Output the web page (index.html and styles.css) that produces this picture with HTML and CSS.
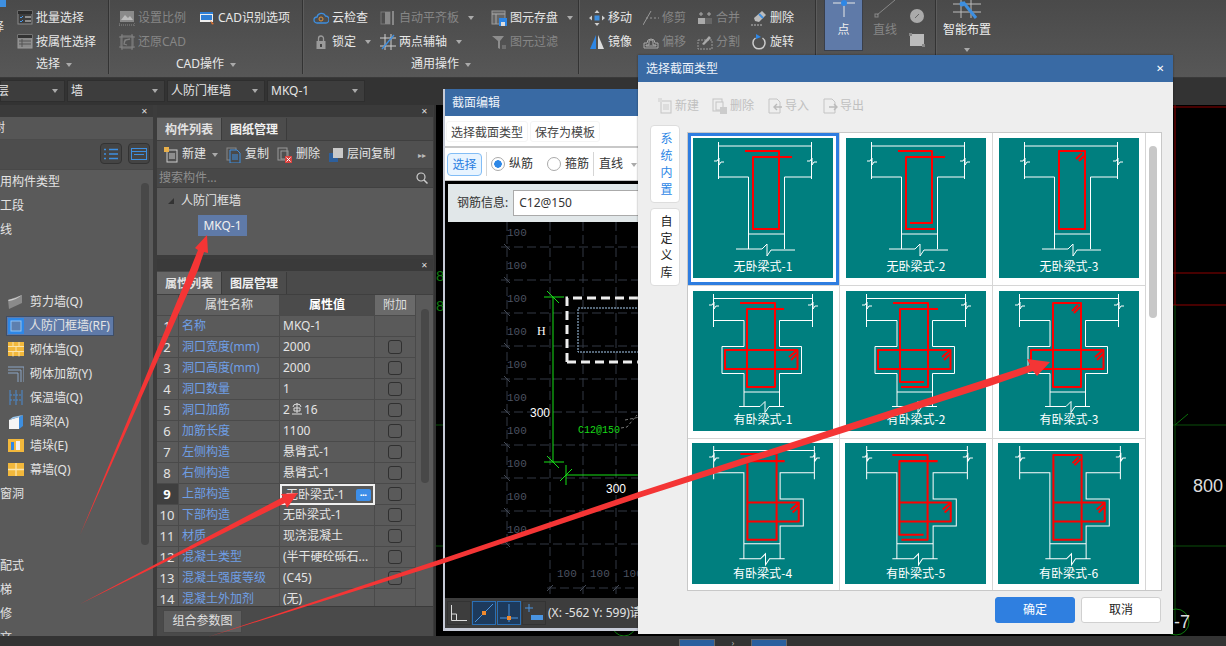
FILE: index.html
```html
<!DOCTYPE html>
<html lang="zh-CN">
<head>
<meta charset="utf-8">
<title>截面编辑</title>
<link rel="stylesheet" href="styles.css">
</head>
<body>
<svg class="defs" width="0" height="0" aria-hidden="true">
  <defs>
    <symbol id="i-batch" viewBox="0 0 16 16"><rect x="1" y="1" width="14" height="13" fill="#3c3c3c" stroke="#8a8a8a"/><rect x="1" y="1" width="14" height="3" fill="#2b2b2b"/><path d="M3 7l1 1 2-2M3 11l1 1 2-2" stroke="#4a9aea" fill="none"/><path d="M8 7h6M8 11h6" stroke="#ddd"/></symbol>
    <symbol id="i-prop" viewBox="0 0 16 16"><rect x="1" y="1" width="14" height="13" fill="#8a8a8a" stroke="#9a9a9a"/><rect x="1" y="1" width="14" height="3" fill="#333"/><path d="M2 7h12M2 10h12M5 5v8" stroke="#555"/></symbol>
    <symbol id="i-scale" viewBox="0 0 16 16"><rect x="1" y="1" width="14" height="11" fill="#8a8a8a"/><path d="M2 10l4-5 3 3 2-2 3 4z" fill="#bbb"/><path d="M0 15h16M0 13v3M16 13v3" stroke="#888" stroke-dasharray="1 1" fill="none"/></symbol>
    <symbol id="i-cad" viewBox="0 0 16 16"><rect x="1" y="2" width="13" height="10" fill="#eee"/><rect x="1" y="2" width="13" height="2" fill="#2e7fd6"/><rect x="2" y="5" width="11" height="5" fill="#2e7fd6"/><path d="M11 10l4 4-2 .5z" fill="#e5732e"/></symbol>
    <symbol id="i-restore" viewBox="0 0 16 16"><path d="M2 2h12v12H2z M0 3h16M0 13h16M3 0v16M13 0v16" fill="none" stroke="#808080"/><path d="M11 5L6 6l-1 4 3 1M5 8l2-2" fill="none" stroke="#808080" stroke-width="1.3"/></symbol>
    <symbol id="i-cloud" viewBox="0 0 16 16"><path d="M4 13a3 3 0 0 1 0-6 4.500 4.500 0 0 1 8.500-1 3.500 3.500 0 0 1 0 7z" fill="none" stroke="#3e8fe0" stroke-width="1.300"/><circle cx="8" cy="9" r="2" fill="none" stroke="#e0913a"/></symbol>
    <symbol id="i-lock" viewBox="0 0 16 16"><rect x="3.500" y="7" width="9" height="8" fill="#9a9a9a"/><path d="M5.500 7V4.500a2.500 2.500 0 0 1 5 0V7" fill="none" stroke="#9a9a9a" stroke-width="1.300"/><rect x="7" y="10" width="2" height="3" fill="#444"/></symbol>
    <symbol id="i-align" viewBox="0 0 16 16"><rect x="1" y="2" width="9" height="12" fill="none" stroke="#777"/><rect x="5" y="2" width="5" height="12" fill="#888"/><path d="M13 1v14" stroke="#888" stroke-width="2"/></symbol>
    <symbol id="i-axis" viewBox="0 0 16 16"><path d="M0 4h16M0 12h16M5 0v16M11 0v16" stroke="#cfcfcf" fill="none"/><path d="M14 1L2 15" stroke="#3e8fe0" stroke-width="1.300"/></symbol>
    <symbol id="i-save" viewBox="0 0 16 16"><rect x="1" y="1" width="13" height="13" fill="#666" stroke="#999"/><path d="M1 4h13M5 4v10" stroke="#aaa"/><rect x="8" y="8" width="8" height="8" fill="#2e87e6"/><rect x="10" y="12" width="4" height="4" fill="#ddd"/></symbol>
    <symbol id="i-filter" viewBox="0 0 16 16"><path d="M1 2h12L9 7v8l-2-1V7z" fill="#8d8d8d"/><path d="M11 12h4M11 14h4" stroke="#8d8d8d"/></symbol>
    <symbol id="i-move" viewBox="0 0 16 16"><path d="M8 0l2.500 3h-5zM8 16l2.500-3h-5zM0 8l3-2.500v5zM16 8l-3-2.500v5z" fill="#cfcfcf"/><rect x="5.500" y="5.500" width="5" height="5" fill="#3e8fe0"/></symbol>
    <symbol id="i-trim" viewBox="0 0 16 16"><path d="M0 15L8 1" stroke="#999" fill="none"/><path d="M3 8h13" stroke="#999" stroke-dasharray="2 2" fill="none"/></symbol>
    <symbol id="i-merge" viewBox="0 0 16 16"><rect x="1" y="8" width="14" height="6" fill="#aaa"/><rect x="8" y="8" width="7" height="6" fill="#666"/><path d="M4 2v4M12 2v4M2 4h4M10 4h4" stroke="#aaa"/></symbol>
    <symbol id="i-erase" viewBox="0 0 16 16"><path d="M11 1l4 4-7 7-4-1-1-3z" fill="#bbb"/><path d="M8 4l4 4" stroke="#3e8fe0" stroke-width="2"/><path d="M0 15h11" stroke="#bbb" stroke-dasharray="2 1"/></symbol>
    <symbol id="i-mirror" viewBox="0 0 16 16"><path d="M7 1v14H1z" fill="#2e87e6"/><path d="M9 1v14h6z" fill="#ddd"/></symbol>
    <symbol id="i-offset" viewBox="0 0 16 16"><path d="M1 14V9h3a4 4 0 0 1 8 0h3v5z M3 12v-1h3V8a2 2 0 0 1 4 0v3h3v1z" fill="none" stroke="#aaa"/></symbol>
    <symbol id="i-split" viewBox="0 0 16 16"><rect x="1" y="6" width="14" height="9" fill="none" stroke="#999" stroke-dasharray="2 1"/><path d="M5 10l7-8 2 2-7 7z" fill="#aaa"/></symbol>
    <symbol id="i-rotate" viewBox="0 0 16 16"><path d="M4.500 4a6 6 0 1 0 7 0" fill="none" stroke="#ccc" stroke-width="1.500"/><path d="M5 0v5l5-2z" fill="#2e87e6"/></symbol>
    <symbol id="i-new" viewBox="0 0 16 16"><rect x="4" y="3" width="10" height="12" fill="none" stroke="currentColor"/><path d="M6 7h6M6 9h6M6 11h6" stroke="currentColor"/><rect x="1" y="0" width="5" height="5" fill="#e9b04a"/></symbol>
    <symbol id="i-copy" viewBox="0 0 16 16"><rect x="1" y="1" width="9" height="12" fill="none" stroke="#888"/><path d="M4 3h7l3 3v10H4z" fill="#4a4a4a" stroke="#3e8fe0"/><path d="M6 8h6M6 10h6M6 12h6" stroke="#3e8fe0"/></symbol>
    <symbol id="i-del" viewBox="0 0 16 16"><rect x="1" y="1" width="9" height="12" fill="none" stroke="#999"/><rect x="4" y="4" width="7" height="8" fill="none" stroke="#999"/><rect x="8" y="9" width="7" height="7" fill="#d9433f"/><path d="M9.500 10.500l4 4m0-4l-4 4" stroke="#fff"/></symbol>
    <symbol id="i-layer" viewBox="0 0 16 16"><rect x="1" y="6" width="9" height="9" fill="#2d5f9c"/><rect x="5" y="1" width="10" height="10" fill="#c9c9c9"/></symbol>
    <symbol id="i-shear" viewBox="0 0 16 16"><path d="M0 6l14-5v8L1 15z" fill="#8a8a8a"/><path d="M0 6q7-1 14-5-6 5-13 6z" fill="#cfcfcf"/></symbol>
    <symbol id="i-rf" viewBox="0 0 16 16"><rect x="0" y="0" width="16" height="16" fill="#2e87e6"/><rect x="3" y="3" width="10" height="10" fill="#5d7fae" stroke="#8fc4f5"/></symbol>
    <symbol id="i-brick" viewBox="0 0 16 16"><rect width="16" height="14" fill="#f2b83c"/><path d="M0 4.500h16M0 9.500h16M5 0v4.500M11 0v4.500M8 4.500v5M5 9.500v5M11 9.500v5" stroke="#fbe5ad"/></symbol>
    <symbol id="i-bar" viewBox="0 0 16 16"><path d="M0 1h16v15M0 4h13v12M0 7h10v9" fill="none" stroke="#8aa4c4"/></symbol>
    <symbol id="i-insul" viewBox="0 0 16 16"><path d="M2 0v15M8 0v15M14 0v15" stroke="#4a8ad0"/><path d="M2 5h12M2 10h12" stroke="#4a8ad0" stroke-dasharray="2 1"/></symbol>
    <symbol id="i-beam" viewBox="0 0 16 16"><path d="M1 6l10-3v12H1z" fill="#f5f5f5"/><path d="M11 3l4-2v11l-4 3z" fill="#3e8fe0"/><path d="M1 6l4-3 10-2-4 2z" fill="#9cc8f0"/></symbol>
    <symbol id="i-pier" viewBox="0 0 16 16"><rect y="1" width="16" height="13" fill="#f2b83c"/><rect x="3" y="4" width="3" height="8" fill="#2e87e6"/><rect x="8" y="3" width="4" height="9" fill="#eee"/></symbol>
    <symbol id="i-curtain" viewBox="0 0 16 16"><rect y="1" width="16" height="13" fill="#f2b83c"/><path d="M0 7.500h16M8 1v13" stroke="#fbe5ad" stroke-width="1.300"/></symbol>
    <symbol id="i-rebar" viewBox="0 0 10 12"><path d="M1 4a4 3 0 0 1 8 0M5 0v10M2 5h6v3H2zM0 11h10" fill="none" stroke="#ddd"/></symbol>
    <symbol id="d-new" viewBox="0 0 16 16"><rect x="4" y="3" width="10" height="12" fill="none" stroke="#c4c4c4"/><path d="M6 7h6M6 9h6M6 11h6" stroke="#ccc"/><rect x="1" y="0" width="4" height="4" fill="#ddd"/></symbol>
    <symbol id="d-del" viewBox="0 0 16 16"><rect x="1" y="1" width="9" height="12" fill="none" stroke="#c4c4c4"/><rect x="4" y="4" width="7" height="8" fill="#eee" stroke="#c4c4c4"/><rect x="8" y="9" width="7" height="7" fill="#ccc"/></symbol>
    <symbol id="d-in" viewBox="0 0 16 16"><path d="M2 1h8l3 3v11H2z" fill="none" stroke="#c4c4c4"/><path d="M15 9H8M10 6L7 9l3 3" fill="none" stroke="#bbb" stroke-width="1.400"/></symbol>
    <symbol id="d-out" viewBox="0 0 16 16"><path d="M2 1h8l3 3v11H2z" fill="none" stroke="#c4c4c4"/><path d="M7 9h8M12 6l3 3-3 3" fill="none" stroke="#bbb" stroke-width="1.400"/></symbol>

    <symbol id="o-t" viewBox="0 0 140 140">
      <path class="w" d="M25.500 8h93M25.500 4v37M118.500 4v37M25.500 39h30v72M118.500 39h-27v72M55.500 96h36M43 111h26l5-5v12l4-6h24M21 23h3l2-3v7l2-3h3M114 23h3l2-3v7l2-3h3"/>
    </symbol>
    <symbol id="o-p" viewBox="0 0 140 140">
      <path class="w" d="M20.500 7.500h99M20.500 3v33M119.500 3v33M20.500 29.500h30.500v26h-22v27h22v33M119.500 29.500h-33v26h22v27h-22v33M51 101h35.500M46 115.500h21l5-5v11l4-6h15M16 14h3l2-3v7l2-3h3M115 14h3l2-3v7l2-3h3"/>
    </symbol>
    <symbol id="o-f" viewBox="0 0 140 140">
      <path class="w" d="M21.500 7.500h100M21.500 3v33M121.500 3v33M21.500 29.500h30v85.500M121.500 29.500h-34v26h23v27h-23v32.500M51.500 100h36M47 115h21l5-5v11l4-6h15M17 14h3l2-3v7l2-3h3M117 14h3l2-3v7l2-3h3"/>
    </symbol>
    <symbol id="r-1" viewBox="0 0 140 140"><path class="r" d="M52 13h34v78H60V19h39"/></symbol>
    <symbol id="r-2" viewBox="0 0 140 140"><path class="r" d="M52 13h34v72H64M99 19H60v72h29"/></symbol>
    <symbol id="r-3" viewBox="0 0 140 140"><path class="r" d="M60 13h26v78H60zM77 21l6-6M80 23l5-5"/></symbol>
    <symbol id="r-p1" viewBox="0 0 140 140"><path class="r" d="M47 12h35v84H54V18h37M32 59h72.500v19H32zM96 66l7-6M98 69l6-6"/></symbol>
    <symbol id="r-p2" viewBox="0 0 140 140"><path class="r" d="M47 12h35v84H55M92 18H54v73h24M32 59h72.500v19H32zM96 66l7-6M98 69l6-6"/></symbol>
    <symbol id="r-p3" viewBox="0 0 140 140"><path class="r" d="M54 12h28v84H54zM32 59h72.500v19H32zM73 20l6-6M75 22l6-6M96 66l7-6M98 69l6-6"/></symbol>
    <symbol id="r-f1" viewBox="0 0 140 140"><path class="r" d="M48 11h36v85H55V18h37M55 59h51v19H55M98 66l7-6M100 69l6-6"/></symbol>
    <symbol id="r-f2" viewBox="0 0 140 140"><path class="r" d="M47 12h35v84H56M92 18H54v73h24M54 59h51v19H54M97 66l7-6M99 69l6-6"/></symbol>
    <symbol id="r-f3" viewBox="0 0 140 140"><path class="r" d="M55 12h28v84H55zM55 59h51v19H55M74 20l6-6M76 22l6-6M98 66l7-6M100 69l6-6"/></symbol>
  </defs>
</svg>

<div class="app">
  <header class="ribbon">
    <section class="rg rg-1">
      <div class="rg-body">
        <div class="rcol-stub"><span class="stub-icon"></span><span class="stub-text">择</span></div>
        <div class="rcol">
          <div class="ri"><svg class="ic"><use href="#i-batch"/></svg>批量选择</div>
          <div class="ri"><svg class="ic"><use href="#i-prop"/></svg>按属性选择</div>
        </div>
      </div>
      <div class="rg-label">选择<i class="caret"></i></div>
    </section>
    <section class="rg rg-2">
      <div class="rg-body">
        <div class="rcol w80">
          <div class="ri off"><svg class="ic"><use href="#i-scale"/></svg>设置比例</div>
          <div class="ri off"><svg class="ic"><use href="#i-restore"/></svg>还原CAD</div>
        </div>
        <div class="rcol">
          <div class="ri"><svg class="ic"><use href="#i-cad"/></svg>CAD识别选项</div>
        </div>
      </div>
      <div class="rg-label">CAD操作<i class="caret"></i></div>
    </section>
    <section class="rg rg-3">
      <div class="rg-body">
        <div class="rcol w67">
          <div class="ri"><svg class="ic"><use href="#i-cloud"/></svg>云检查</div>
          <div class="ri"><svg class="ic"><use href="#i-lock"/></svg>锁定<i class="caret"></i></div>
        </div>
        <div class="rcol w111">
          <div class="ri off"><svg class="ic"><use href="#i-align"/></svg>自动平齐板<i class="caret"></i></div>
          <div class="ri"><svg class="ic"><use href="#i-axis"/></svg>两点辅轴<i class="caret"></i></div>
        </div>
        <div class="rcol">
          <div class="ri"><svg class="ic"><use href="#i-save"/></svg>图元存盘<i class="caret"></i></div>
          <div class="ri off"><svg class="ic"><use href="#i-filter"/></svg>图元过滤</div>
        </div>
      </div>
      <div class="rg-label">通用操作<i class="caret"></i></div>
    </section>
    <section class="rg rg-4">
      <div class="rg-body">
        <div class="rcol w54">
          <div class="ri"><svg class="ic"><use href="#i-move"/></svg>移动</div>
          <div class="ri"><svg class="ic"><use href="#i-mirror"/></svg>镜像</div>
        </div>
        <div class="rcol w54">
          <div class="ri off"><svg class="ic"><use href="#i-trim"/></svg>修剪</div>
          <div class="ri off"><svg class="ic"><use href="#i-offset"/></svg>偏移</div>
        </div>
        <div class="rcol w54">
          <div class="ri off"><svg class="ic"><use href="#i-merge"/></svg>合并</div>
          <div class="ri off"><svg class="ic"><use href="#i-split"/></svg>分割</div>
        </div>
        <div class="rcol">
          <div class="ri"><svg class="ic"><use href="#i-erase"/></svg>删除</div>
          <div class="ri"><svg class="ic"><use href="#i-rotate"/></svg>旋转</div>
        </div>
      </div>
    </section>
    <section class="rg rg-5">
      <div class="rb-point">
        <svg class="rb-point-ic" width="38" height="20" viewBox="0 0 38 20"><path d="M8 3h22M19 3v14" stroke="#e8e8e8" fill="none"/><circle cx="19" cy="3" r="3" fill="#2e87e6"/></svg>
        <span>点</span>
      </div>
      <div class="rb-line off">
        <svg width="24" height="20" viewBox="0 0 24 20"><path d="M4 15L22 0" stroke="#888" fill="none"/><rect x="2" y="14" width="3" height="3" fill="none" stroke="#888"/></svg>
        <span>直线</span>
      </div>
      <div class="rb-small">
        <svg width="16" height="16" viewBox="0 0 16 16"><circle cx="8" cy="8" r="7" fill="#aaa"/><path d="M6 10l4-4" stroke="#666"/></svg>
        <svg width="16" height="14" viewBox="0 0 16 14"><rect x="1" y="1" width="14" height="12" fill="#bbb"/><rect x="0" y="0" width="3" height="3" fill="#888"/><rect x="13" y="11" width="3" height="3" fill="#888"/></svg>
      </div>
    </section>
    <section class="rg rg-6">
      <div class="rb-smart">
        <svg width="32" height="20" viewBox="0 0 32 20"><path d="M2 4h28M2 12h28M10 0v18M20 0v18" stroke="#bbb" fill="none"/><path d="M12 2l13 16" stroke="#3e8fe0" stroke-width="3"/><circle cx="11" cy="4" r="2.500" fill="#3e8fe0"/></svg>
        <span>智能布置</span>
        <i class="caret"></i>
      </div>
    </section>
  </header>

  <nav class="selbar">
    <div class="sel sel-0"><span class="clip-first">层</span><i class="caret"></i></div>
    <div class="sel">墙<i class="caret"></i></div>
    <div class="sel">人防门框墙<i class="caret"></i></div>
    <div class="sel">MKQ-1<i class="caret"></i></div>
  </nav>

  <main class="main">
    <aside class="left">
      <div class="dock-head"><span class="x">✕</span></div>
      <div class="tree-title"><span class="clip-first">树</span></div>
      <div class="left-tools">
        <button class="lt-btn"><svg width="14" height="12" viewBox="0 0 14 12"><path d="M0 1.500h2M5 1.500h9M0 6h2M5 6h9M0 10.500h2M5 10.500h9" stroke="#3e8fe0" stroke-width="1.300"/></svg></button>
        <button class="lt-btn"><svg width="16" height="12" viewBox="0 0 16 12"><rect x=".5" y=".5" width="15" height="11" fill="none" stroke="#3e8fe0"/><path d="M1 3.500h14M3 6.500h10" stroke="#3e8fe0"/></svg></button>
      </div>
      <div class="left-body">
        <div class="left-list">
          <div class="li">用构件类型</div>
          <div class="li">工段</div>
          <div class="li">线</div>
          <div class="li-gap"></div>
          <div class="li sub"><svg class="ic"><use href="#i-shear"/></svg>剪力墙(Q)</div>
          <div class="li sub cur"><svg class="ic"><use href="#i-rf"/></svg>人防门框墙(RF)</div>
          <div class="li sub"><svg class="ic"><use href="#i-brick"/></svg>砌体墙(Q)</div>
          <div class="li sub"><svg class="ic"><use href="#i-bar"/></svg>砌体加筋(Y)</div>
          <div class="li sub"><svg class="ic"><use href="#i-insul"/></svg>保温墙(Q)</div>
          <div class="li sub"><svg class="ic"><use href="#i-beam"/></svg>暗梁(A)</div>
          <div class="li sub"><svg class="ic"><use href="#i-pier"/></svg>墙垛(E)</div>
          <div class="li sub"><svg class="ic"><use href="#i-curtain"/></svg>幕墙(Q)</div>
          <div class="li">窗洞</div>
          <div class="li-gap"></div>
          <div class="li">配式</div>
          <div class="li">梯</div>
          <div class="li">修</div>
          <div class="li">文</div>
        </div>
        <div class="left-scroll"><span></span></div>
      </div>
    </aside>

    <div class="split"></div>

    <div class="mid">
      <section class="comp">
        <div class="dock-head"><span class="x">✕</span></div>
        <div class="tabs"><span class="tab on">构件列表</span><span class="tab">图纸管理</span></div>
        <div class="comp-tools">
          <span class="ct"><svg class="ic ic-new"><use href="#i-new"/></svg>新建<i class="caret"></i></span>
          <span class="ct"><svg class="ic"><use href="#i-copy"/></svg>复制</span>
          <span class="ct"><svg class="ic"><use href="#i-del"/></svg>删除</span>
          <span class="ct"><svg class="ic"><use href="#i-layer"/></svg>层间复制</span>
          <span class="more">▸▸</span>
        </div>
        <div class="search"><span>搜索构件...</span><svg width="12" height="12" viewBox="0 0 12 12"><circle cx="5" cy="5" r="4" fill="none" stroke="#ccc" stroke-width="1.200"/><path d="M8 8l3.500 3.500" stroke="#ccc" stroke-width="1.500"/></svg></div>
        <div class="ctree">
          <div class="ct-root"><i class="tri"></i>人防门框墙</div>
          <div class="ct-leaf">MKQ-1</div>
        </div>
      </section>
      <section class="props">
        <div class="dock-head"><span class="x">✕</span></div>
        <div class="tabs"><span class="tab on">属性列表</span><span class="tab">图层管理</span></div>
        <div class="ptable-wrap">
          <div class="ptable">
            <div class="tr th"><span class="c0"></span><span class="c1">属性名称</span><span class="c2">属性值</span><span class="c3">附加</span></div>
            <div class="tr"><span class="c0">1</span><span class="c1">名称</span><span class="c2">MKQ-1</span><span class="c3"></span></div>
            <div class="tr"><span class="c0">2</span><span class="c1">洞口宽度(mm)</span><span class="c2">2000</span><span class="c3"><i class="chk"></i></span></div>
            <div class="tr"><span class="c0">3</span><span class="c1">洞口高度(mm)</span><span class="c2">2000</span><span class="c3"><i class="chk"></i></span></div>
            <div class="tr"><span class="c0">4</span><span class="c1">洞口数量</span><span class="c2">1</span><span class="c3"><i class="chk"></i></span></div>
            <div class="tr"><span class="c0">5</span><span class="c1">洞口加筋</span><span class="c2">2<svg class="rebar"><use href="#i-rebar"/></svg>16</span><span class="c3"><i class="chk"></i></span></div>
            <div class="tr"><span class="c0">6</span><span class="c1">加筋长度</span><span class="c2">1100</span><span class="c3"><i class="chk"></i></span></div>
            <div class="tr"><span class="c0">7</span><span class="c1">左侧构造</span><span class="c2">悬臂式-1</span><span class="c3"><i class="chk"></i></span></div>
            <div class="tr"><span class="c0">8</span><span class="c1">右侧构造</span><span class="c2">悬臂式-1</span><span class="c3"><i class="chk"></i></span></div>
            <div class="tr cur"><span class="c0">9</span><span class="c1">上部构造</span><span class="c2 edit">无卧梁式-1<b class="dots">•••</b></span><span class="c3"><i class="chk"></i></span></div>
            <div class="tr"><span class="c0">10</span><span class="c1">下部构造</span><span class="c2">无卧梁式-1</span><span class="c3"><i class="chk"></i></span></div>
            <div class="tr"><span class="c0">11</span><span class="c1">材质</span><span class="c2">现浇混凝土</span><span class="c3"><i class="chk"></i></span></div>
            <div class="tr"><span class="c0">12</span><span class="c1">混凝土类型</span><span class="c2">(半干硬砼砾石...</span><span class="c3"><i class="chk"></i></span></div>
            <div class="tr"><span class="c0">13</span><span class="c1">混凝土强度等级</span><span class="c2">(C45)</span><span class="c3"><i class="chk"></i></span></div>
            <div class="tr"><span class="c0">14</span><span class="c1">混凝土外加剂</span><span class="c2">(无)</span><span class="c3"></span></div>
          </div>
          <div class="pscroll"><span></span></div>
        </div>
        <div class="pfoot"><button class="pbtn">组合参数图</button></div>
      </section>
    </div>

    <div class="split split-r"></div>

    <div class="canvas">
      <svg class="cad-bg" viewBox="436 105 790 531" width="790" height="531">
        <path d="M1175 105v200M1173 273h53M1173 305h53M1173 107h53" stroke="#8e0000" fill="none"/>
        <path d="M1175 305v316M1173 425h53M1173 546h53M436 425h8M436 546h8" stroke="#0b4f0b" fill="none"/>
        <path d="M1175 425l13-11" stroke="#0b6f0b" fill="none"/>
        <circle cx="1176" cy="622" r="13" fill="none" stroke="#0d7a0d"/>
        <circle cx="624" cy="624" r="12" fill="none" stroke="#0d7a0d"/>
        <text class="cad-txt" x="1193" y="492">800</text>
        <text class="cad-txt" x="1174" y="628">-7</text>
        <text class="cad-g" x="436" y="281">8</text>
        <text class="cad-g" x="436" y="311">8</text>
      </svg>
    </div>
  </main>

  <footer class="status">
    <span class="st-btn"></span><span class="st-mid">›</span><span class="st-btn"></span>
  </footer>

  <section class="win sect">
    <div class="w-title">截面编辑</div>
    <div class="sect-menu"><span class="mbtn">选择截面类型</span><span class="mbtn">保存为模板</span></div>
    <div class="sect-tools">
      <span class="pick">选择</span>
      <i class="vsep"></i>
      <label class="radio"><i class="rd on"></i>纵筋</label>
      <label class="radio r2"><i class="rd"></i>箍筋</label>
      <i class="vsep"></i>
      <span class="drop">直线<i class="caret"></i></span>
    </div>
    <div class="sect-canvas">
      <div class="rebar-info"><span>钢筋信息:</span><span class="rinput">C12@150</span></div>
      <svg class="sect-svg" viewBox="445 222 198 376" width="198" height="376">
        <path class="g" d="M507 222v326M550 222v372M583 222v372M616 222v372M501 247h145M501 280h145M501 313h145M501 346h145M501 379h145M501 412h145M501 445h145M501 478h145M501 511h145M501 544h145M547 588h100"/>
        <path class="gt" d="M504 244l6 6M504 277l6 6M504 310l6 6M504 343l6 6M504 376l6 6M504 409l6 6M504 442l6 6M504 475l6 6M504 508l6 6M504 541l6 6M547 591l6-6M580 591l6-6M613 591l6-6"/>
        <g class="n">
          <text x="507" y="236">100</text><text x="507" y="269">100</text><text x="507" y="302">100</text><text x="507" y="335">100</text><text x="507" y="368">100</text><text x="507" y="401">100</text><text x="507" y="434">100</text><text x="507" y="467">100</text><text x="507" y="500">100</text><text x="507" y="533">100</text>
          <text x="557" y="577">100</text><text x="590" y="577">100</text><text x="623" y="577">100</text>
        </g>
        <path class="dash-w" d="M567 362V298H646M567 362H646"/>
        <path class="dash-b" d="M646 308H578V352H646"/>
        <path class="grn" d="M553 297v165M544 297h20M544 462h20M547 291l12 12M547 456l12 12M566 475h80M566 465v20M560 481l12-12"/>
        <path class="grey-leader" d="M621 428l6-1 10-12M625 420l15-3" />
        <text class="t-h" x="537" y="335">H</text>
        <text class="t-w" x="530" y="417">300</text>
        <text class="t-w" x="606" y="493">300</text>
        <text class="t-g" x="578" y="433">C12@150</text>
      </svg>
    </div>
    <div class="sect-status">
      <span class="sb"><svg width="16" height="16" viewBox="0 0 16 16"><path d="M.5 0v15.500H16M.5 9h5v6.500" fill="none" stroke="#ddd"/></svg></span>
      <span class="sb on"><svg width="18" height="18" viewBox="0 0 18 18"><path d="M0 18L18 0" stroke="#4a94e0"/><rect x="7" y="7" width="4" height="4" fill="#f08a2e"/></svg></span>
      <span class="sb on"><svg width="18" height="18" viewBox="0 0 18 18"><path d="M9 0v18M0 14h18" stroke="#4a94e0"/><rect x="7" y="12" width="4" height="4" fill="#f08a2e"/></svg></span>
      <span class="sb"><svg width="18" height="18" viewBox="0 0 18 18"><path d="M0 4h8M4 0v8" stroke="#4a94e0"/><rect x="6" y="11" width="12" height="5" fill="#4a94e0"/></svg></span>
      <span class="coord">(X: -562 Y: 599)请</span>
    </div>
  </section>

  <section class="win dlg">
    <div class="w-title dlg-title">选择截面类型<span class="w-close">✕</span></div>
    <div class="dlg-tools">
      <span class="dt"><svg class="ic"><use href="#d-new"/></svg>新建</span>
      <span class="dt"><svg class="ic"><use href="#d-del"/></svg>删除</span>
      <span class="dt"><svg class="ic"><use href="#d-in"/></svg>导入</span>
      <span class="dt"><svg class="ic"><use href="#d-out"/></svg>导出</span>
    </div>
    <div class="dlg-body">
      <div class="vtabs">
        <div class="vtab on">系统内置</div>
        <div class="vtab">自定义库</div>
      </div>
      <div class="gridbox">
        <div class="cards">
          <div class="cell sel-cell"><svg class="card" viewBox="0 0 140 140"><use href="#o-t"/><use href="#r-1"/><text x="70" y="133">无卧梁式-1</text></svg></div>
          <div class="cell"><svg class="card" viewBox="0 0 140 140"><use href="#o-t"/><use href="#r-2"/><text x="70" y="133">无卧梁式-2</text></svg></div>
          <div class="cell"><svg class="card" viewBox="0 0 140 140"><use href="#o-t"/><use href="#r-3"/><text x="70" y="133">无卧梁式-3</text></svg></div>
          <div class="cell"><svg class="card" viewBox="0 0 140 140"><use href="#o-p"/><use href="#r-p1"/><text x="70" y="133">有卧梁式-1</text></svg></div>
          <div class="cell"><svg class="card" viewBox="0 0 140 140"><use href="#o-p"/><use href="#r-p2"/><text x="70" y="133">有卧梁式-2</text></svg></div>
          <div class="cell"><svg class="card" viewBox="0 0 140 140"><use href="#o-p"/><use href="#r-p3"/><text x="70" y="133">有卧梁式-3</text></svg></div>
          <div class="cell low"><svg class="card" viewBox="0 0 140 140"><use href="#o-f"/><use href="#r-f1"/><text x="70" y="134">有卧梁式-4</text></svg></div>
          <div class="cell low"><svg class="card" viewBox="0 0 140 140"><use href="#o-f"/><use href="#r-f2"/><text x="70" y="134">有卧梁式-5</text></svg></div>
          <div class="cell low"><svg class="card" viewBox="0 0 140 140"><use href="#o-f"/><use href="#r-f3"/><text x="70" y="134">有卧梁式-6</text></svg></div>
        </div>
        <div class="gscroll"><span></span></div>
      </div>
    </div>
    <div class="dlg-foot"><button class="btn pri">确定</button><button class="btn">取消</button></div>
  </section>

  <svg class="arrows" width="1226" height="646" viewBox="0 0 1226 646">
    <path d="M80 535L190 270l8-20-3-2 12-13 1 18-4-1-6 18z"/>
    <path d="M80 604L283 497l-2-3 17-1-11 15-2-5z"/>
    <path d="M208 637L440 559.500 640 491.500 990 378 1030 365l-3-6 23 3-13 14-4-5-43 15-350 111.500-200 67z"/>
  </svg>
</div>
</body>
</html>
```

FILE: styles.css
```css
* { box-sizing: border-box; }
html, body { margin: 0; padding: 0; }
body {
  width: 1226px; height: 646px; overflow: hidden; background: #000;
  font: 12px/1.2 "Noto Sans", "Noto Sans CJK SC", sans-serif; color: #e4e4e4;
}
.defs { position: absolute; }
.app { position: relative; width: 1226px; height: 646px; overflow: hidden; display: flex; flex-direction: column; background: #333; }
.ic { width: 16px; height: 16px; flex: none; }
i { font-style: normal; }
.caret { display: inline-block; width: 0; height: 0; border: 3.5px solid transparent; border-top: 4px solid #aaa; border-bottom: 0; margin-left: 6px; vertical-align: middle; flex: none; }

/* ribbon */
.ribbon { height: 78px; flex: none; display: flex; background: linear-gradient(#4a4a4a, #575757); border-bottom: 1px solid #3a3a3a; }
.rg { display: flex; flex-direction: column; border-right: 1px solid #333; box-shadow: 1px 0 0 #5c5c5c; margin-right: 1px; height: 74px; flex: none; }
.rg-1 { width: 109px; padding-left: 0; }
.rg-2 { width: 193px; padding-left: 9px; }
.rg-3 { width: 275px; padding-left: 9px; }
.rg-4 { width: 236px; padding-left: 9px; }
.rg-5 { width: 119px; flex-direction: row; padding-left: 7px; }
.rg-6 { border: 0; box-shadow: none; width: 100px; padding-left: 2px; }
.rg-body { display: flex; height: 54px; padding-top: 6px; flex: none; }
.rg-label { text-align: center; height: 20px; line-height: 20px; color: #e8e8e8; }
.rg-2 .rg-label, .rg-3 .rg-label { margin-left: -9px; }
.rcol { display: flex; flex-direction: column; flex: none; }
.w80 { width: 80px; } .w67 { width: 67px; } .w111 { width: 111px; } .w54 { width: 54px; }
.rcol-stub { width: 17px; position: relative; overflow: hidden; margin-top: -6px; }
.stub-icon { display: block; width: 6px; height: 7px; background: #3e8fe0; }
.stub-text { display: block; margin: 13px 0 0 -8px; }
.ri { height: 24px; display: flex; align-items: center; gap: 3px; white-space: nowrap; color: #e8e8e8; }
.ri.off, .off { color: #868686; }
.rb-point { width: 39px; height: 51px; background: #5f7aa8; border: 1px solid #3a3f4a; border-top: 0; display: flex; flex-direction: column; align-items: center; gap: 3px; color: #eee; flex: none; }
.rb-line { width: 44px; display: flex; flex-direction: column; align-items: center; gap: 3px; flex: none; }
.rb-small { width: 20px; display: flex; flex-direction: column; align-items: center; padding-top: 8px; gap: 9px; flex: none; }
.rb-small svg { flex: none; }
.rb-smart { width: 58px; margin-left: -1px; display: flex; flex-direction: column; align-items: center; gap: 3px; color: #eee; white-space: nowrap; }
.rb-smart .caret { margin: 8px 0 0; }

/* selector bar */
.selbar { height: 27px; flex: none; display: flex; gap: 2px; background: #333; padding-top: 2px; }
.sel { width: 98px; height: 22px; background: #3d3d3d; border: 1px solid #2e2e2e; display: flex; align-items: center; justify-content: space-between; padding: 0 4px 0 3px; color: #e6e6e6; }
.sel-0 { width: 65px; }
.clip-first { margin-left: -7px; }
.sel .caret { margin-right: 2px; }

/* main */
.main { flex: 1; display: flex; min-height: 0; }
.split { width: 4px; background: #3c3c3c; flex: none; }
.split-r { width: 2px; background: #333; }
.dock-head { height: 12px; background: #3a3a3a; display: flex; justify-content: flex-end; align-items: center; padding-right: 5px; flex: none; }
.x { font-size: 8px; line-height: 12px; color: #ddd; }
.left { width: 153px; background: #5a5a5a; display: flex; flex-direction: column; overflow: hidden; flex: none; }
.tree-title { height: 23px; flex: none; line-height: 21px; border-bottom: 1px solid #4b4b4b; background: #565656; }
.left-tools { height: 30px; flex: none; display: flex; gap: 6px; justify-content: flex-end; padding: 3px 3px 0 0; background: #4d4d4d; border-bottom: 1px solid #484848; }
.lt-btn { width: 22px; height: 21px; padding: 0; background: #444; border: 1px solid #333; border-radius: 4px; display: flex; align-items: center; justify-content: center; }
.left-body { flex: 1; display: flex; min-height: 0; overflow: hidden; }
.left-list { width: 141px; flex: none; }
.li { height: 24px; line-height: 24px; white-space: nowrap; display: flex; align-items: center; gap: 6px; }
.li.sub { padding-left: 8px; margin-left: 0; }
.li.cur { background: #5f7aa8; border: 1px solid #3e4e68; margin-left: 6px; margin-right: 27px; padding-left: 1px; height: 20px; margin-top: 2px; margin-bottom: 2px; gap: 5px; }
.li-gap { height: 48px; }
.left-scroll { width: 12px; padding: 13px 4px 0 0; }
.left-scroll span { display: block; width: 8px; height: 362px; background: #484848; border-radius: 4px; }

.mid { width: 277px; flex: none; display: flex; flex-direction: column; background: #3c3c3c; }
.comp { height: 150px; background: #5a5a5a; display: flex; flex-direction: column; border-right: 1px solid #3c3c3c; flex: none; }
.props { margin-top: 4px; flex: 1; min-height: 0; display: flex; flex-direction: column; background: #4c4c4c; border-right: 1px solid #3c3c3c; }
.tabs { height: 24px; flex: none; display: flex; background: #4a4a4a; padding-top: 1px; border-bottom: 1px solid #3f3f3f; }
.tab { width: 65px; text-align: center; line-height: 23px; font-weight: 700; color: #f0f0f0; background: #4c4c4c; border-right: 1px solid #3b3b3b; }
.tab.on { background: #666; color: #e2e2e2; }
.comp-tools { height: 27px; flex: none; display: flex; align-items: center; padding-left: 6px; background: #505050; gap: 8px; position: relative; }
.ct { display: flex; align-items: center; gap: 3px; white-space: nowrap; }
.ic-new { color: #ccc; }
.ct .caret { margin-left: 3px; }
.more { margin-left: auto; margin-right: 7px; font-size: 8px; color: #bbb; }
.search { height: 20px; flex: none; display: flex; justify-content: space-between; align-items: center; padding: 0 5px 0 2px; background: #484848; color: #8e8e8e; border-top: 1px solid #444; border-bottom: 1px solid #404040; }
.ctree { flex: 1; padding: 4px 0 0 11px; }
.ct-root { display: flex; align-items: center; gap: 7px; height: 18px; }
.tri { width: 0; height: 0; border-style: solid; border-width: 0 0 6px 6px; border-color: transparent transparent #333 transparent; }
.ct-leaf { margin: 5px 0 0 30px; width: 49px; height: 21px; line-height: 21px; text-align: center; background: #5f7aa8; color: #f0f0f0; }
.ptable-wrap { height: 312px; flex: none; display: flex; background: #5a5a5a; overflow: hidden; border-bottom: 1px solid #3a3a3a; }
.ptable { width: 259px; flex: none; }
.tr { display: grid; grid-template-columns: 22px 101px 95px 41px; height: 21px; line-height: 20px; }
.tr > span { border-right: 1px solid #4a4a4a; border-bottom: 1px solid #4a4a4a; white-space: nowrap; overflow: hidden; }
.th > span { text-align: center; background: #5f5f5f; }
.th .c0 { background: #5a5a5a; }
.th .c2 { background: #4b4b4b; font-weight: 700; color: #fff; }
.th .c3 { background: #6a6a6a; color: #ddd; }
.c0 { text-align: center; font-size: 13px; padding-right: 1px; }
.tr .c1 { padding-left: 3px; color: #6f9fe6; }
.tr.th .c1 { color: #e0e0e0; padding: 0; }
.tr .c2 { padding-left: 3px; font-size: 12px; }
.tr.th .c2 { padding: 0; }
.c3 { display: flex; align-items: center; justify-content: center; }
.chk { width: 14px; height: 14px; border: 1px solid #303030; border-radius: 3px; background: #5a5a5a; }
.tr.cur .c0 { background: #3f3f3f; color: #fff; font-weight: 700; }
.tr .c2.edit { border: 2px solid #f0f0f0; padding-left: 4px; line-height: 17px; display: flex; align-items: center; justify-content: space-between; padding-right: 2px; }
.dots { width: 15px; height: 12px; background: #3d8ee8; border-radius: 2px; color: #fff; font-size: 6px; line-height: 12px; text-align: center; }
.rebar { width: 10px; height: 12px; margin: 0 2px; vertical-align: -1px; }
.pscroll { flex: 1; padding: 14px 0 0 5px; }
.pscroll span { display: block; width: 8px; height: 174px; border-radius: 4px; background: #484848; }
.pfoot { flex: 1; padding: 3px 0 0 6px; background: #4a4a4a; }
.pbtn { width: 79px; height: 23px; padding: 0; font: inherit; color: #e0e0e0; background: #5e5e5e; border: 1px solid #474747; }

.canvas { flex: 1; position: relative; background: #000; overflow: hidden; }
.cad-bg { display: block; }
.cad-txt { font: 18px "Liberation Sans", sans-serif; fill: #ddd; }
.cad-g { font: 15px "Liberation Sans", sans-serif; fill: #0f7a0f; }
.status { height: 10px; flex: none; background: #333; display: flex; gap: 8px; padding: 3px 0 0 679px; color: #aaa; font-size: 9px; line-height: 8px; }
.st-btn { width: 36px; height: 7px; background: #2a5f9e; border: 1px solid #666; border-bottom: 0; }
.st-mid { width: 20px; text-align: center; }

/* floating windows */
.win { position: absolute; display: flex; flex-direction: column; overflow: hidden; }
.w-title { height: 27px; flex: none; background: #396aa4; color: #eef3fa; line-height: 27px; padding-left: 7px; position: relative; }
.sect { left: 443px; top: 89px; width: 200px; height: 542px; background: #c6cad6; border: 2px solid #c6cad6; border-top: 0; border-bottom-width: 3px; color: #333; }
.sect-menu { height: 32px; flex: none; background: #fff; padding: 5px 0 0 1px; display: flex; gap: 2px; border-bottom: 2px solid #c8c8c8; }
.mbtn { height: 21px; line-height: 21px; padding: 0 4px; border: 1px solid #f4f4f4; border-radius: 3px; color: #444; white-space: nowrap; }
.sect-tools { height: 33px; flex: none; background: #fff; display: flex; align-items: center; padding-left: 2px; white-space: nowrap; border-bottom: 1px solid #c8c8c8; }
.pick { width: 35px; height: 23px; line-height: 21px; text-align: center; border: 1px solid #82bdf6; border-radius: 4px; background: #e8f4ff; color: #2a7ee0; }
.vsep { width: 1px; height: 24px; background: #d5d5d5; margin: 0 3px 0 4px; flex: none; }
.radio { display: flex; align-items: center; gap: 4px; margin-left: 1px; }
.r2 { margin-left: 14px; }
.rd { width: 14px; height: 14px; border: 1px solid #aaa; border-radius: 50%; background: #fff; }
.rd.on { background: radial-gradient(circle, #2e87e6 3.5px, #fff 4px); }
.drop { padding-left: 2px; }
.drop .caret { margin-left: 8px; }
.sect-canvas { flex: 1; min-height: 0; background: #000; display: flex; flex-direction: column; padding-top: 3px; }
.rebar-info { height: 38px; flex: none; margin-left: 3px; width: 200px; background: #e1e7e9; display: flex; align-items: center; gap: 5px; padding-left: 9px; color: #333; white-space: nowrap; }
.rinput { flex: 1; height: 26px; line-height: 24px; background: #fff; border: 1px solid #aaa; padding-left: 5px; }
.sect-svg { flex: none; display: block; overflow: hidden; }
.sect-svg .g { stroke: #333945; stroke-dasharray: 9 4; fill: none; }
.sect-svg .gt { stroke: #444a56; fill: none; }
.sect-svg .n text { font: 11px "Liberation Mono", monospace; fill: #4c5260; }
.sect-svg .dash-w { stroke: #eee; stroke-width: 3; stroke-dasharray: 9 5; fill: none; }
.sect-svg .dash-b { stroke: #a9cdf0; stroke-dasharray: 2 1; fill: none; }
.sect-svg .grn { stroke: #17e017; fill: none; }
.sect-svg .grey-leader { stroke: #777; stroke-dasharray: 3 2; fill: none; }
.t-h { font: 12px "Liberation Serif", serif; fill: #fff; }
.t-w { font: 12px "Liberation Sans", sans-serif; fill: #fff; }
.t-g { font: 10px "Liberation Mono", monospace; fill: #18d818; }
.sect-status { height: 30px; flex: none; background: #3d3d3d; display: flex; align-items: center; gap: 1px; padding-left: 2px; color: #e4e4e4; white-space: nowrap; font-size: 12px; }
.sb { width: 24px; height: 24px; border: 1px solid #333; display: flex; align-items: center; justify-content: center; flex: none; }
.sb.on { background: #1d3a5c; border-color: #2a6fb5; }
.coord { margin-left: 1px; }

.dlg { left: 638px; top: 55px; width: 535px; height: 579px; background: #eee; color: #333; box-shadow: 0 0 2px rgba(0,0,0,.4); }
.dlg-title { padding-left: 8px; }
.w-close { position: absolute; right: 9px; top: 0; font-size: 10px; color: #fff; }
.dlg-tools { height: 50px; flex: none; display: flex; gap: 13px; padding: 16px 0 0 19px; color: #c0c0c0; }
.dt { display: flex; align-items: center; gap: 2px; height: 16px; white-space: nowrap; }
.dlg-body { height: 459px; flex: none; display: flex; padding-left: 12px; }
.vtabs { width: 30px; flex: none; display: flex; flex-direction: column; gap: 5px; margin-top: -7px; }
.vtab { width: 30px; height: 78px; background: #fff; border: 1px solid #ddd; border-radius: 4px; writing-mode: vertical-rl; text-align: center; line-height: 28px; letter-spacing: 5px; color: #222; padding-top: 4px; text-orientation: upright; }
.vtab.on { color: #2e87e6; }
.gridbox { margin-left: 7px; width: 475px; height: 459px; background: #fff; border: 1px solid #c8c8c8; display: flex; overflow: hidden; }
.cards { width: 458px; flex: none; display: grid; grid-template-columns: 152px 153px 153px; grid-auto-rows: 153px; align-content: start; }
.cell { border-right: 1px solid #d6d6d6; border-bottom: 1px solid #d6d6d6; padding: 5px 0 0 6px; }
.cell:nth-child(3n+1) { padding-left: 5px; }
.cell.low { padding-top: 4px; }
.cell.low .card { width: 141px; height: 141px; margin-left: -1px; }
.sel-cell { box-shadow: inset 0 0 0 3px #2e7de0; }
.card { display: block; width: 140px; height: 140px; background: #007f7f; }
.card text { fill: #fff; font: 12px "Noto Sans CJK SC", sans-serif; text-anchor: middle; }
.w { stroke: #fff; fill: none; stroke-width: 1; }
.r { stroke: #f00; fill: none; stroke-width: 2; stroke-linejoin: round; }
.gscroll { flex: 1; padding: 13px 0 0 3px; }
.gscroll span { display: block; width: 8px; height: 172px; background: #c8c8c8; border-radius: 4px; }
.dlg-foot { display: flex; justify-content: flex-end; gap: 6px; padding: 6px 12px 0 0; }
.btn { width: 80px; height: 26px; padding: 0; font: inherit; border: 1px solid #d0d0d0; border-radius: 3px; background: #fff; color: #222; }
.btn.pri { background: #2f7fe0; border-color: #2f7fe0; color: #fff; }

.arrows { position: absolute; left: 0; top: 0; pointer-events: none; }
.arrows path { fill: #f43535; }
```
